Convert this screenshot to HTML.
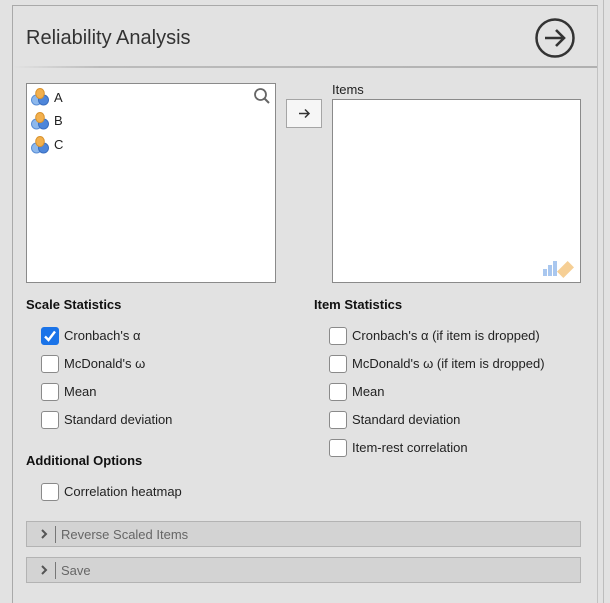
<!DOCTYPE html>
<html style="height:603px;overflow:hidden"><head><style>
*{box-sizing:border-box;margin:0;padding:0}
body{width:610px;height:603px;background:#e2e2e2;font-family:"Liberation Sans",sans-serif;color:#222;position:relative;overflow:hidden;font-size:13px}
.abs{position:absolute}
.panel{left:12px;top:5px;width:586px;height:598px;border:1px solid #a9a9a9;border-bottom:none;border-right-color:#c2c2c2;background:#e2e2e2}
.box{background:#fff;border:1px solid #8a8a8a}
.cb{position:absolute;width:18px;height:18px;background:#fff;border:1px solid #8a8a8a;border-radius:3px}
.lbl{position:absolute;font-size:13px;color:#222}
.h{position:absolute;font-weight:bold;font-size:13px;color:#111}
.bar{position:absolute;left:26px;width:555px;height:26px;background:#d3d3d3;border:1px solid #b3b3b3;color:#666;font-size:13px}
</style></head><body>
<div class="abs panel"></div>
<div class="abs" style="left:603px;top:0;width:1px;height:603px;background:#bdbdbd"></div>
<div class="abs" style="left:26px;top:27px;font-size:20px;color:#333">Reliability Analysis</div>
<svg class="abs" style="left:534px;top:17px" width="42" height="42" viewBox="0 0 42 42"><circle cx="21" cy="21" r="18.5" fill="none" stroke="#333" stroke-width="2.5"/><path d="M11 21H30M22 13L30 21L22 29" fill="none" stroke="#333" stroke-width="2.6"/></svg>
<div class="abs" style="left:13px;top:66px;width:584px;height:2px;background:linear-gradient(to right,#e2e2e2,#bcbcbc 15%,#b0b0b0)"></div>
<div class="abs box" style="left:26px;top:83px;width:250px;height:200px"></div>
<svg class="abs" style="left:253px;top:87px" width="18" height="18" viewBox="0 0 18 18"><circle cx="7.5" cy="7.5" r="5.5" fill="none" stroke="#666" stroke-width="1.8"/><path d="M11.5 11.5L16 16" stroke="#666" stroke-width="2"/></svg>
<svg class="abs" style="left:31px;top:87px" width="20" height="72" viewBox="0 0 20 72">
<g id="ic"><circle cx="5.5" cy="13" r="5" fill="#8db8ec" stroke="#5b8fd6"/><circle cx="12.5" cy="13" r="5" fill="#4e86da" stroke="#3a6fc0"/><ellipse cx="9" cy="6.5" rx="4.3" ry="5" fill="#f2b04e" stroke="#d9922c"/></g>
<use href="#ic" y="24"/><use href="#ic" y="48"/></svg>
<div class="lbl" style="left:54px;top:90px">A</div>
<div class="lbl" style="left:54px;top:113px">B</div>
<div class="lbl" style="left:54px;top:137px">C</div>
<div class="abs" style="left:286px;top:99px;width:36px;height:29px;background:#f6f6f6;border:1px solid #a5a5a5"><svg width="34" height="27" viewBox="0 0 34 27" style="position:absolute;left:0;top:0"><path d="M12 13.5H22M18 9.5L22 13.5L18 17.5" fill="none" stroke="#333" stroke-width="1.5"/></svg></div>
<div class="lbl" style="left:332px;top:82px">Items</div>
<div class="abs box" style="left:332px;top:99px;width:249px;height:184px"></div>
<svg class="abs" style="left:542px;top:258px" width="36" height="20" viewBox="0 0 36 20"><rect x="1" y="11" width="4" height="7" fill="#a9c7ef"/><rect x="6" y="7" width="4" height="11" fill="#a9c7ef"/><rect x="11" y="3" width="4" height="15" fill="#a9c7ef"/><rect x="19" y="4" width="9" height="15" fill="#f6cf95" transform="rotate(45 23.5 11.5)"/></svg>
<div class="h" style="left:26px;top:297px">Scale Statistics</div>
<div class="h" style="left:314px;top:297px">Item Statistics</div>
<div class="cb" style="left:41px;top:327px;background:#1a73e8;border-color:#1a73e8"><svg width="16" height="16" viewBox="0 0 16 16" style="position:absolute;left:0;top:0"><path d="M3 8.5L6.5 12L13 3.5" fill="none" stroke="#fff" stroke-width="2.4"/></svg></div>
<div class="lbl" style="left:64px;top:328px">Cronbach's α</div>
<div class="cb" style="left:41px;top:355px"></div><div class="lbl" style="left:64px;top:356px">McDonald's ω</div>
<div class="cb" style="left:41px;top:383px"></div><div class="lbl" style="left:64px;top:384px">Mean</div>
<div class="cb" style="left:41px;top:411px"></div><div class="lbl" style="left:64px;top:412px">Standard deviation</div>
<div class="cb" style="left:329px;top:327px"></div><div class="lbl" style="left:352px;top:328px">Cronbach's α (if item is dropped)</div>
<div class="cb" style="left:329px;top:355px"></div><div class="lbl" style="left:352px;top:356px">McDonald's ω (if item is dropped)</div>
<div class="cb" style="left:329px;top:383px"></div><div class="lbl" style="left:352px;top:384px">Mean</div>
<div class="cb" style="left:329px;top:411px"></div><div class="lbl" style="left:352px;top:412px">Standard deviation</div>
<div class="cb" style="left:329px;top:439px"></div><div class="lbl" style="left:352px;top:440px">Item-rest correlation</div>
<div class="h" style="left:26px;top:453px">Additional Options</div>
<div class="cb" style="left:41px;top:483px"></div><div class="lbl" style="left:64px;top:484px">Correlation heatmap</div>
<div class="bar" style="top:521px"><svg width="10" height="12" viewBox="0 0 10 12" style="position:absolute;left:12px;top:6px"><path d="M3 2L7 6L3 10" fill="none" stroke="#555" stroke-width="2"/></svg><span style="position:absolute;left:28px;top:4px;width:1px;height:17px;background:#777"></span><span style="position:absolute;left:34px;top:5px">Reverse Scaled Items</span></div>
<div class="bar" style="top:557px"><svg width="10" height="12" viewBox="0 0 10 12" style="position:absolute;left:12px;top:6px"><path d="M3 2L7 6L3 10" fill="none" stroke="#555" stroke-width="2"/></svg><span style="position:absolute;left:28px;top:4px;width:1px;height:17px;background:#777"></span><span style="position:absolute;left:34px;top:5px">Save</span></div>
</body></html>
